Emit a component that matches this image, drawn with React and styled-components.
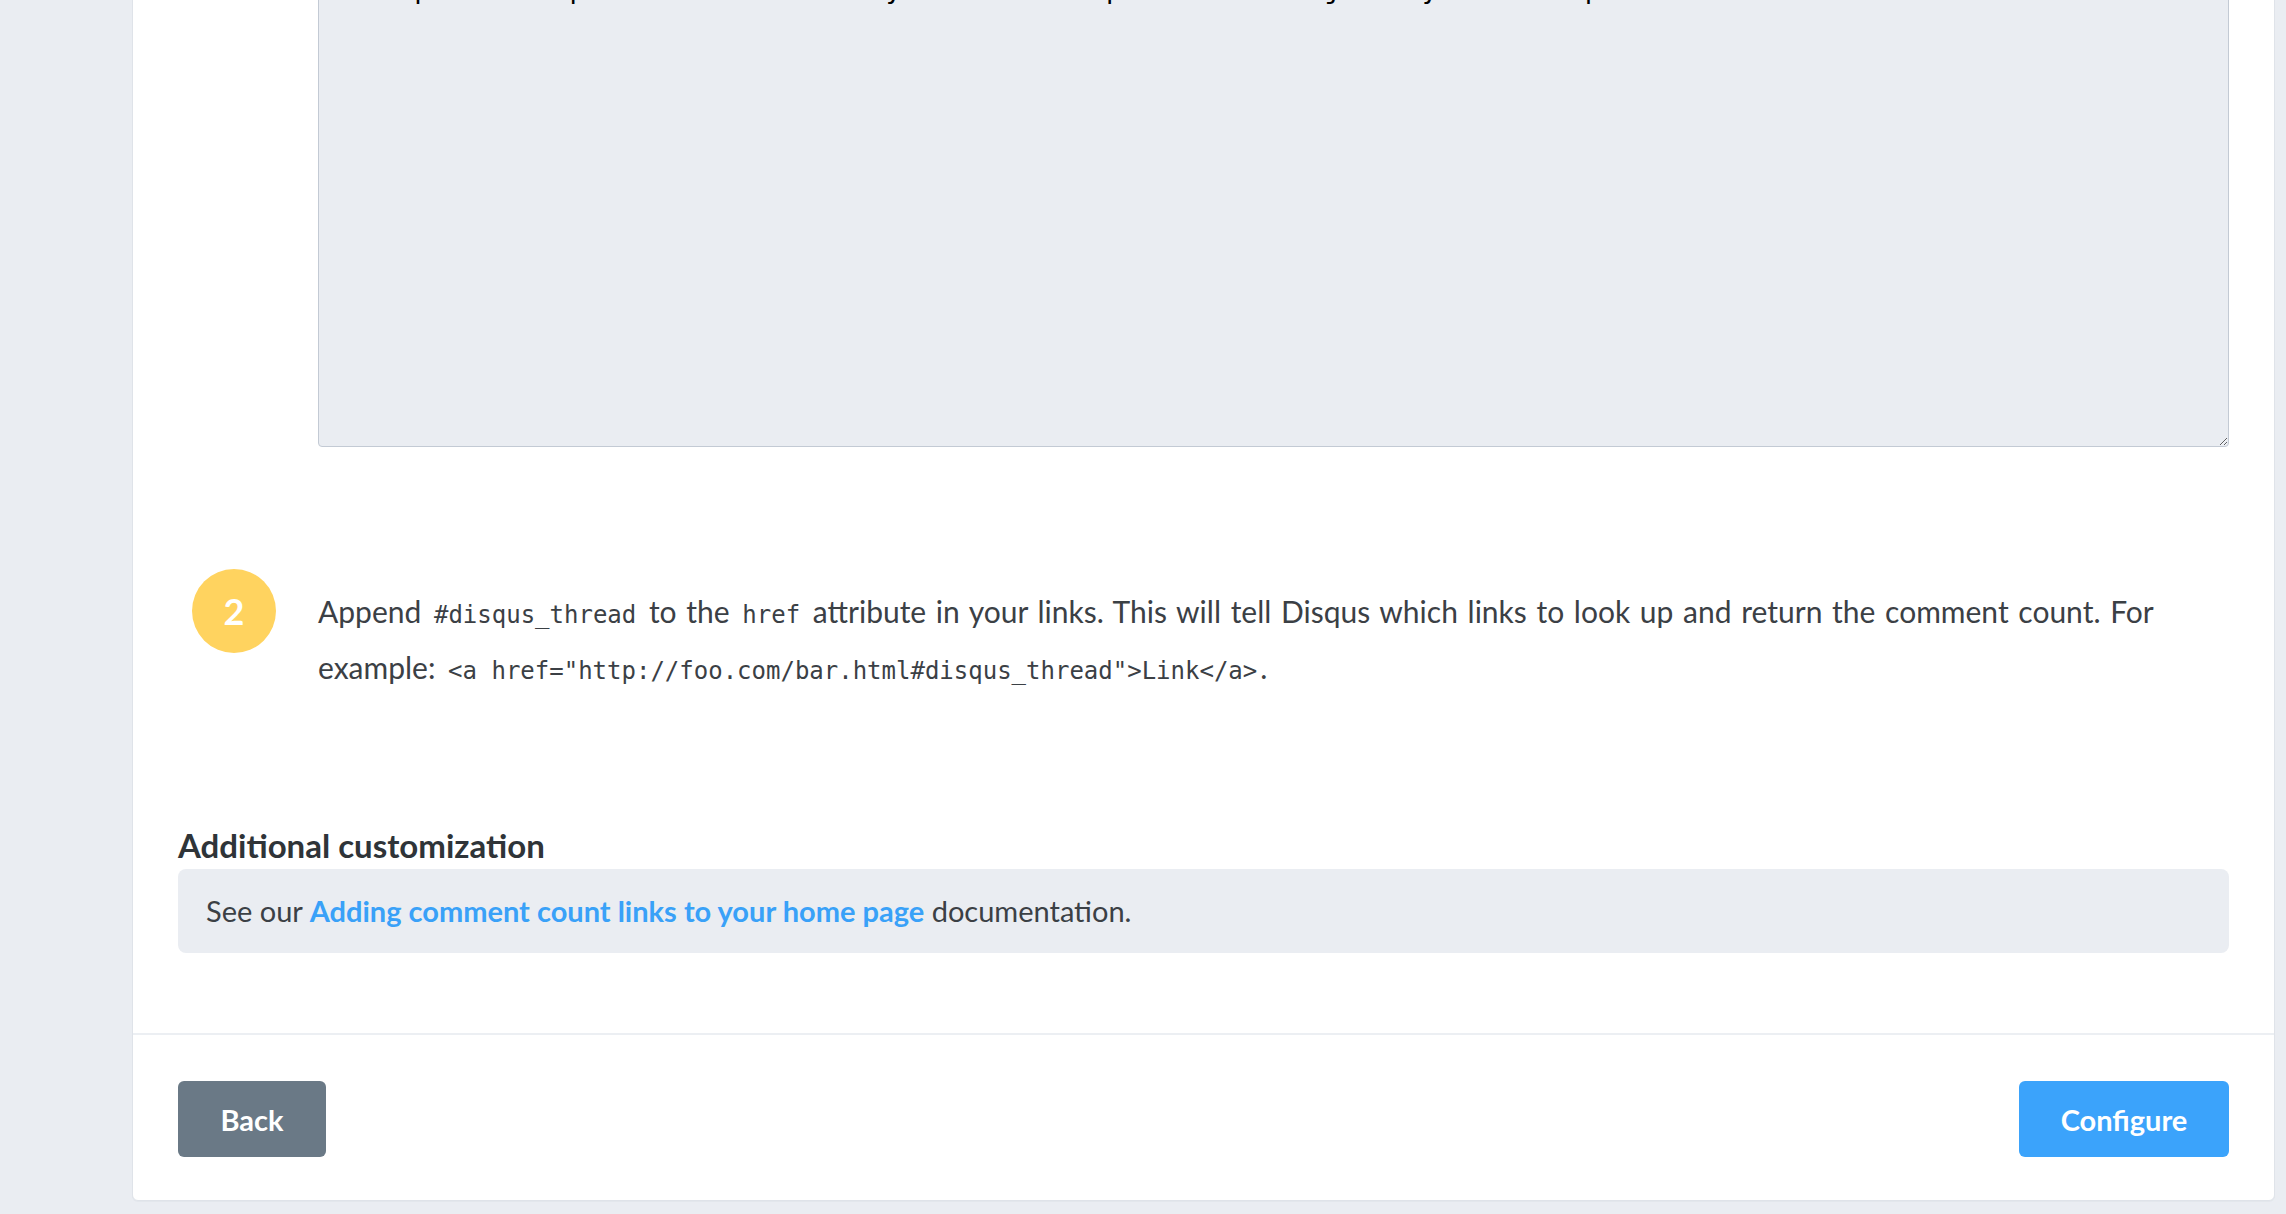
import styled, { createGlobalStyle } from "styled-components";

const GlobalStyle = createGlobalStyle`
  html, body {
    margin: 0;
    padding: 0;
  }
  body {
    background: #eaedf2;
    font-family: "Lato", "Liberation Sans", sans-serif;
    color: #3b4045;
    overflow: hidden;
  }
  * {
    box-sizing: border-box;
  }
`;

const COUNT_SNIPPET = `<script id="dsq-count-scr" src="//your-site.disqus.com/count.js" async></script>`;

function App() {
  return (
    <>
      <GlobalStyle />
      <Page>
        <Card>
          <Body>
            <Step $gap="136px">
              <StepNumber>1</StepNumber>
              <StepContent>
                <StepText>
                  Place the following code before your site's closing{" "}
                  <Code>&lt;/body&gt;</Code> tag:
                </StepText>
                <SnippetBox readOnly value={"\n\n" + COUNT_SNIPPET} />
              </StepContent>
            </Step>

            <Step $gap="130px">
              <StepNumber>2</StepNumber>
              <StepContent>
                <StepText>
                  Append <Code>#disqus_thread</Code> to the <Code>href</Code>{" "}
                  attribute in your links. This will tell Disqus which links to
                  look up and return the comment count. For example:{" "}
                  <Code>&lt;a href="http://foo.com/bar.html#disqus_thread"&gt;Link&lt;/a&gt;</Code>.
                </StepText>
              </StepContent>
            </Step>

            <SectionTitle>Additional customization</SectionTitle>
            <InfoBox>
              See our <DocLink href="#">Adding comment count links to your home page</DocLink>{" "}
              documentation.
            </InfoBox>
          </Body>

          <Footer>
            <Button $bg="#6a7986" $width="148px">Back</Button>
            <Button $bg="#3ba3fb" $width="210px">Configure</Button>
          </Footer>
        </Card>
      </Page>
    </>
  );
}

export default App;

const Page = styled.div`
  padding: 0 11px 12px 132px;
`;

const Card = styled.div`
  margin-top: -272px;
  background: #fff;
  border: 1px solid #dfe3e9;
  border-radius: 6px;
  box-shadow: 0 1px 0 #e3e7ec;
`;

const Body = styled.div`
  padding: 46px 45px 80px 45px;
`;

const Step = styled.div`
  display: grid;
  grid-template-columns: 140px 1fr;
  align-items: start;
  margin-bottom: ${(p) => p.$gap};
`;

const StepNumber = styled.div`
  width: 84px;
  height: 84px;
  margin: -14px 0 0 14px;
  border-radius: 50%;
  background: #ffd35f;
  color: #fff;
  font-size: 36px;
  font-weight: 700;
  display: flex;
  align-items: center;
  justify-content: center;
`;

const StepContent = styled.div`
  display: flex;
  flex-direction: column;
  gap: 16px;
`;

const StepText = styled.p`
  margin: 0;
  font-size: 30px;
  line-height: 56px;
  word-spacing: 2px;
`;

const Code = styled.code`
  font-family: "DejaVu Sans Mono", "Liberation Mono", monospace;
  font-size: 24px;
  line-height: 1;
  padding: 0 3px;
  word-spacing: 0;
  white-space: nowrap;
`;

const SnippetBox = styled.textarea`
  display: block;
  width: 100%;
  height: 600px;
  padding: 41px 14px 14px;
  background: #eaedf2;
  border: 1px solid #c3cad4;
  border-radius: 4px;
  color: #000;
  font-family: "DejaVu Sans Mono", "Liberation Mono", monospace;
  font-size: 27px;
  line-height: 40px;
  resize: vertical;
  outline: none;
`;

const SectionTitle = styled.h3`
  margin: 0 0 4px;
  font-size: 33px;
  line-height: 40px;
  font-weight: 700;
  color: #2f3438;
`;

const InfoBox = styled.div`
  padding: 14px 28px;
  background: #eaedf2;
  border-radius: 8px;
  font-size: 29px;
  line-height: 56px;
`;

const DocLink = styled.a`
  color: #39a1f8;
  font-weight: 700;
  text-decoration: none;
`;

const Footer = styled.div`
  display: flex;
  justify-content: space-between;
  align-items: center;
  padding: 46px 45px 43px;
  border-top: 2px solid #eceff3;
`;

const Button = styled.button`
  width: ${(p) => p.$width};
  height: 76px;
  border: none;
  border-radius: 6px;
  background: ${(p) => p.$bg};
  color: #fff;
  font-family: "Lato", "Liberation Sans", sans-serif;
  font-size: 29px;
  font-weight: 700;
  cursor: pointer;
`;
